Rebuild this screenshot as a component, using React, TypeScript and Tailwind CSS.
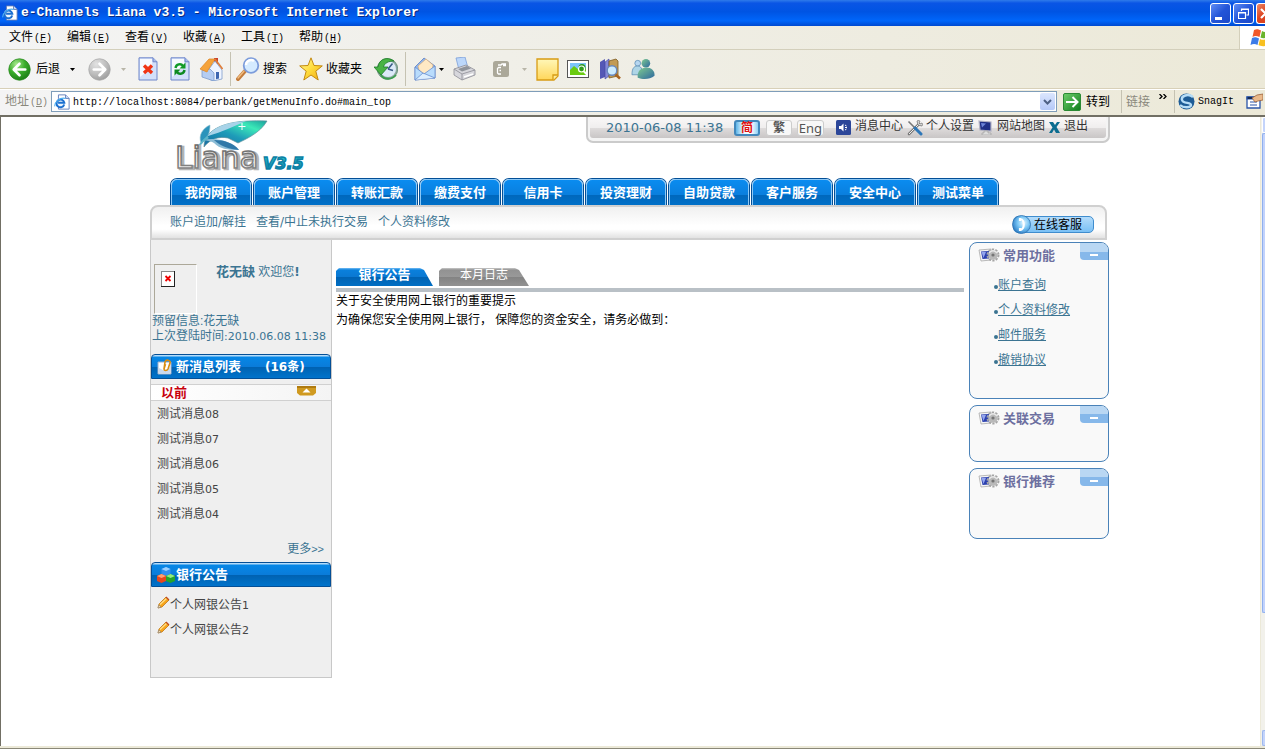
import React from "react";

const latin = "font-['DejaVu_Sans',sans-serif] text-[11px]";

function Key({ k }: { k: string }) {
  return (
    <span className="ml-px font-['Liberation_Mono',monospace] text-[10px]">
      (<span className="underline">{k}</span>)
    </span>
  );
}

function PageIcon({ size }: { size: number }) {
  return (
    <svg width={size} height={size} viewBox="0 0 18 18" className="shrink-0">
      <path d="M5 1h8l4 4v12H5z" fill="#fff" stroke="#5b79b8" />
      <path d="M13 1v4h4" fill="#cfdcf5" stroke="#5b79b8" />
      <circle cx="7" cy="10" r="5" fill="#e8f4ff" />
      <path d="M11.5 11.8A4.4 4.4 0 1 1 11.6 9.8H4.6" fill="none" stroke="#1b6fd0" strokeWidth="2.2" />
      <path d="M1 14C0 10 7 3 13 5" fill="none" stroke="#4fb0f0" strokeWidth="1.2" />
    </svg>
  );
}

function BackIcon() {
  return (
    <svg width="23" height="23" viewBox="0 0 24 24">
      <defs>
        <radialGradient id="bk" cx="35%" cy="25%" r="80%"><stop offset="0" stopColor="#a5e88c" /><stop offset=".5" stopColor="#3cae2c" /><stop offset="1" stopColor="#1c7d16" /></radialGradient>
      </defs>
      <circle cx="12" cy="12" r="11.2" fill="url(#bk)" stroke="#2a8a20" strokeWidth=".8" />
      <path d="M12 6l-6 6 6 6M6.5 12H18" fill="none" stroke="#fff" strokeWidth="2.8" strokeLinecap="round" strokeLinejoin="round" />
    </svg>
  );
}

function ForwardIcon() {
  return (
    <svg width="23" height="23" viewBox="0 0 24 24">
      <defs>
        <radialGradient id="fw" cx="35%" cy="25%" r="80%"><stop offset="0" stopColor="#e2e2e2" /><stop offset=".6" stopColor="#bcbcbc" /><stop offset="1" stopColor="#9c9c9c" /></radialGradient>
      </defs>
      <circle cx="12" cy="12" r="11.2" fill="url(#fw)" stroke="#aaa" strokeWidth=".8" />
      <path d="M12 6l6 6-6 6M17.5 12H6" fill="none" stroke="#fff" strokeWidth="2.8" strokeLinecap="round" strokeLinejoin="round" />
    </svg>
  );
}

function SheetShape() {
  return (
    <>
      <path d="M1 .8h14l4 4V23H1z" fill="#d3e0fa" stroke="#6f86c9" />
      <path d="M2 2h12v8L2 20z" fill="#fff" opacity=".8" />
      <path d="M15 .8v4h4" fill="#a9bdea" stroke="#6f86c9" />
    </>
  );
}

function StopIcon() {
  return (
    <svg width="20" height="24" viewBox="0 0 20 24">
      <SheetShape />
      <path d="M6 8.500l8 7.500M14 8.500l-8 7.500" stroke="#f03414" strokeWidth="3.400" />
    </svg>
  );
}

function RefreshIcon() {
  return (
    <svg width="20" height="24" viewBox="0 0 20 24">
      <SheetShape />
      <path d="M5.500 11C6 7 11 6 13 9" fill="none" stroke="#129a28" strokeWidth="2.400" />
      <path d="M15.500 5.500v6h-6z" fill="#129a28" />
      <path d="M14.500 13C14 17 9 18 7 15" fill="none" stroke="#0d8a20" strokeWidth="2.400" />
      <path d="M4.500 18.500v-6h6z" fill="#0d8a20" />
    </svg>
  );
}

function HomeIcon() {
  return (
    <svg width="24" height="24" viewBox="0 0 24 24">
      <path d="M15 1h4v6h-4z" fill="#c8402c" />
      <path d="M10 12l6-8 7 9v9l-9 2-4-2z" fill="#eef4ff" stroke="#7e9ccb" strokeWidth=".8" />
      <path d="M3 13l8-1 4 4v8L3 20z" fill="#b5cdf2" stroke="#7e9ccb" strokeWidth=".8" />
      <path d="M1 12L10 2h6l-7 11-1 2z" fill="#f5a33b" stroke="#e08a2c" strokeWidth=".8" />
      <path d="M16 2l7.500 10" stroke="#e07c38" strokeWidth="1.600" />
      <path d="M17 15h3v6.500l-3 .8z" fill="#3d66b0" />
    </svg>
  );
}

function SearchIcon() {
  return (
    <svg width="24" height="24" viewBox="0 0 24 24">
      <path d="M2 22l7-8" stroke="#c47b3a" strokeWidth="4" strokeLinecap="round" />
      <path d="M2 21l6-7" stroke="#f0bd80" strokeWidth="1.400" strokeLinecap="round" />
      <circle cx="15" cy="8.500" r="7.300" fill="#d5ebff" stroke="#7c9cdb" strokeWidth="1.800" />
      <path d="M10 8a5 5 0 0 1 8-4" fill="none" stroke="#fff" strokeWidth="2.500" />
    </svg>
  );
}

function StarIcon() {
  return (
    <svg width="24" height="24" viewBox="0 0 24 24">
      <defs><linearGradient id="st" x2="1" y2="1"><stop offset="0" stopColor="#fff8a0" /><stop offset=".5" stopColor="#ffdc3c" /><stop offset="1" stopColor="#f0a810" /></linearGradient></defs>
      <path d="M12 .8l3 7.700 8.300.4-6.500 5.300 2.400 8.800L12 18l-7.200 5 2.400-8.800L.7 8.900 9 8.500z" fill="url(#st)" stroke="#c38a10" />
    </svg>
  );
}

function HistoryIcon() {
  return (
    <svg width="24" height="24" viewBox="0 0 24 24">
      <circle cx="13.500" cy="12" r="10.300" fill="#8aa79c" stroke="#5f8a74" strokeWidth=".8" />
      <circle cx="14" cy="12" r="8" fill="#dceaf8" />
      <path d="M14 12l4.500-5.500M14 12l5 1.500" stroke="#3b5d86" strokeWidth="1.600" />
      <path d="M20 4C13-1 5 2 4 10H0l7 8 7-8h-4.500c1-4 5-6 10.500-6z" fill="#48b344" stroke="#1c7a28" strokeWidth=".8" />
      <path d="M7 18c3 5 11 5 15 0" fill="none" stroke="#3c9f50" strokeWidth="1.800" />
    </svg>
  );
}

function MailIcon() {
  return (
    <svg width="22" height="24" viewBox="0 0 22 24">
      <path d="M1 10L10 1l11 8v12L1 23z" fill="#8fb6ee" stroke="#6080c0" strokeWidth=".8" />
      <path d="M4 9l8-7 7 6-1 6-8 3-5-4z" fill="#ffe9c4" stroke="#d8a46a" strokeWidth=".6" />
      <path d="M1 10l9 7 11-8v12L1 23z" fill="#b9dcfc" stroke="#6a8fd0" strokeWidth=".8" />
      <path d="M1 23l8-7 12 5" fill="#fff" fillOpacity=".5" stroke="#6a8fd0" strokeWidth=".8" />
    </svg>
  );
}

function PrinterIcon() {
  return (
    <svg width="24" height="24" viewBox="0 0 24 24">
      <path d="M4 1l9-1 3 11-9 2z" fill="#bcd7fa" stroke="#7b9ed8" strokeWidth=".8" />
      <path d="M2 12l12-4 9 5v5l-13 5-8-5z" fill="#d7d7dc" stroke="#8d8d96" strokeWidth=".8" />
      <path d="M2 12l8 5 13-4M10 17v6" fill="none" stroke="#94949c" strokeWidth=".9" />
      <path d="M6 12l9-3 4 2.500-9 3z" fill="#8f939a" />
      <path d="M12 20l9-3" stroke="#fff" strokeWidth="1.500" />
    </svg>
  );
}

function EditIcon() {
  return (
    <svg width="18" height="18" viewBox="0 0 18 18">
      <rect x="1" y="1" width="16" height="16" rx="2.500" fill="#aba899" />
      <path d="M9 7.500H6.500L5.500 8.500V13l1 1H9M7.500 10.500H9M6 5H9l1-1h4M11 5.500h3" stroke="#fff" strokeWidth="1.300" fill="none" />
    </svg>
  );
}

function NoteIcon() {
  return (
    <svg width="23" height="23" viewBox="0 0 23 23">
      <defs><linearGradient id="nt" x2="0" y2="1"><stop offset="0" stopColor="#fff7b8" /><stop offset="1" stopColor="#ffd65a" /></linearGradient></defs>
      <path d="M1 1h21v17l-4 4H1z" fill="url(#nt)" stroke="#d79c14" strokeWidth="1.300" />
      <path d="M22 17h-5v5" fill="#ffeb9a" stroke="#d79c14" strokeWidth="1.300" />
    </svg>
  );
}

function PictureIcon() {
  return (
    <svg width="22" height="18" viewBox="0 0 22 18">
      <rect x=".5" y=".5" width="21" height="17" fill="#fff" stroke="#555" />
      <rect x="3" y="3" width="16" height="12" fill="#7cc4fa" />
      <path d="M3 10l4-4 5 4 3-5 4 4v6H3z" fill="#6acb10" />
      <circle cx="15" cy="7.500" r="3.500" fill="#2f9a1e" />
      <circle cx="14.500" cy="9" r="3" fill="none" stroke="#fff" strokeWidth="1.200" />
      <path d="M17 11.500l3 3" stroke="#fff" strokeWidth="2" />
    </svg>
  );
}

function BooksIcon() {
  return (
    <svg width="22" height="22" viewBox="0 0 22 22">
      <path d="M1 4l5-3v18l-5 2z" fill="#5457b5" /><path d="M6 4l4-3v17l-4 3z" fill="#8487d8" stroke="#40439a" strokeWidth=".6" />
      <path d="M10 3l7-2 2 2v15l-9 2z" fill="#c29a54" stroke="#7d5c22" strokeWidth=".8" />
      <circle cx="13" cy="12.500" r="4.800" fill="#ccebff" stroke="#6788bd" strokeWidth="1.400" />
      <path d="M16.500 16.500l4.500 4" stroke="#a76320" strokeWidth="2.600" />
    </svg>
  );
}

function PeopleIcon() {
  return (
    <svg width="24" height="22" viewBox="0 0 25 22">
      <defs><linearGradient id="pp" x2="1" y2="1"><stop offset="0" stopColor="#7ecb8f" /><stop offset="1" stopColor="#2d679f" /></linearGradient></defs>
      <circle cx="7" cy="5" r="3" fill="#b6d6f0" stroke="#5c8db5" strokeWidth=".8" />
      <path d="M1 17c0-8 3-9 6-9s5 2 5 9z" fill="#aed5e6" stroke="#5c8db5" strokeWidth=".8" />
      <circle cx="15.500" cy="5" r="4.500" fill="url(#pp)" />
      <path d="M7 20c-1-7 4-10.500 9-10.500S25 13 24.500 18c-5 4-12 4-17.500 2z" fill="url(#pp)" />
    </svg>
  );
}

function GoIcon() {
  return (
    <svg width="18" height="18" viewBox="0 0 18 18">
      <defs><linearGradient id="go" x2="1" y2="1"><stop offset="0" stopColor="#6fce6b" /><stop offset="1" stopColor="#0f7d1b" /></linearGradient></defs>
      <rect x=".5" y=".5" width="17" height="17" rx="1.500" fill="url(#go)" stroke="#2a8a33" />
      <path d="M3 9h11M9.500 4L14.500 9l-5 5" fill="none" stroke="#fff" strokeWidth="2" />
    </svg>
  );
}

function SnagItIcon() {
  return (
    <svg width="17" height="17" viewBox="0 0 17 17">
      <circle cx="8.500" cy="8.500" r="8" fill="#1d5c96" />
      <path d="M15 4C10 0 3 3 4 7s9 2 9 5-8 3-11 0" fill="none" stroke="#b6ddf7" strokeWidth="2.400" />
    </svg>
  );
}

function HandIcon() {
  return (
    <svg width="17" height="17" viewBox="0 0 17 17">
      <path d="M1 4h13v11H1z" fill="#fff" stroke="#2b55a8" strokeWidth="1.300" />
      <path d="M1 4h6v2H1zM4 9h7M4 12h7" stroke="#2b55a8" strokeWidth="1.200" />
      <path d="M6 5l5-3 6-1v6l-5 1-3 1z" fill="#eab98a" stroke="#99613a" strokeWidth=".8" />
    </svg>
  );
}

function Caret({ muted }: { muted?: boolean }) {
  return (
    <svg width="5" height="3" viewBox="0 0 5 3" className="shrink-0">
      <path d="M0 0h5L2.500 3z" fill={muted ? "#b8b5a8" : "#000"} />
    </svg>
  );
}

function Divider() {
  return <span className="w-px self-stretch bg-[#c5c2b2]" />;
}

function Logo() {
  return (
    <svg width="132" height="59" viewBox="0 0 132 59" aria-label="Liana V3.5">
      <defs>
        <linearGradient id="lf" x1="0" y1="1" x2="1" y2="0"><stop offset="0" stopColor="#1668a0" /><stop offset=".45" stopColor="#1e9bb8" /><stop offset=".75" stopColor="#3ce9b8" /><stop offset="1" stopColor="#1a9f9c" /></linearGradient>
        <linearGradient id="lg" x2="0" y2="1"><stop offset="0" stopColor="#666" /><stop offset="1" stopColor="#8a8a8a" /></linearGradient>
        <linearGradient id="lv" x2="0" y2="1"><stop offset="0" stopColor="#2fd0c8" /><stop offset="1" stopColor="#0b6ea4" /></linearGradient>
      </defs>
      <path d="M31 17C42 4 62 1 91 2 84 14 70 20 62 24L52 19c-9-2-18 1-24 9 0-4 1-8 3-11z" fill="url(#lf)" stroke="#5d8f9b" strokeWidth=".7" />
      <path d="M32 16C42 5 56 3 70 2 58 7 46 13 32 17z" fill="#a8d3e8" />
      <path d="M25 24c-3-8 2-15 9-18 0 8-2 13-9 18z" fill="#2b93bb" stroke="#8fc0d0" strokeWidth=".6" />
      <path d="M27 21c12-3 27 0 36 10-12 0-19-1-25-7-5-3-8-2-11-3z" fill="#8cbdd6" />
      <path d="M38 21c10 0 20 3 25 10-10-1-17-3-25-10z" fill="#2f78a8" />
      <path d="M31 17C25 22 21 27 19 33l3-1c2-6 6-10 11-13z" fill="#5bb4c8" />
      <path d="M66 4v7M62.500 7.500h7" stroke="#fff" strokeWidth="1" />
      <text x="1" y="50" fontFamily="DejaVu Sans" fontSize="31" fill="#aaa" stroke="#b4b4b4" strokeWidth="2.500">Liana</text>
      <text x="-1" y="49" fontFamily="DejaVu Sans" fontSize="31" fill="#f5f5f5" stroke="url(#lg)" strokeWidth="1.500">Liana</text>
      <text x="87" y="50" fontFamily="DejaVu Sans" fontWeight="bold" fontStyle="italic" fontSize="16" fill="url(#lv)" stroke="#0b7fa5" strokeWidth="1.400">V3.5</text>
    </svg>
  );
}

function SpeakerIcon() {
  return (
    <svg width="15" height="15" viewBox="0 0 15 15">
      <rect width="15" height="15" rx="1.500" fill="#2c4699" />
      <path d="M3 6h2l2.500-2.500v8L5 9H3z" fill="#fff" />
      <path d="M9 5l1.500 1M9 7.500h2M9 10l1.500-1" stroke="#fff" strokeWidth="1" />
    </svg>
  );
}

function ToolsIcon() {
  return (
    <svg width="16" height="16" viewBox="0 0 16 16">
      <path d="M2 14L12 4" stroke="#777" strokeWidth="2.600" strokeLinecap="round" />
      <path d="M2 14L11 5" stroke="#eee" strokeWidth="1" />
      <path d="M10 1l1 4 4 1c1-2 0-3 0-3l-2 1-1-1 1-2s-2-1-3 0z" fill="#ddd" stroke="#777" strokeWidth=".8" />
      <path d="M1.500 1.500L8 8" stroke="#777" strokeWidth="1.600" />
      <path d="M8 8l6 6" stroke="#2e77b8" strokeWidth="3" strokeLinecap="round" />
    </svg>
  );
}

function MonitorIcon() {
  return (
    <svg width="15" height="15" viewBox="0 0 15 15">
      <path d="M1 1l12 1v9L2 10z" fill="#1f2f86" stroke="#b4b4c4" strokeWidth="1.200" />
      <path d="M3 3l5 .5-4 4z" fill="#6d84d8" />
      <path d="M6 11h4v2h3v2H4v-2h2z" fill="#ddd" stroke="#999" strokeWidth=".6" />
    </svg>
  );
}

function ExitIcon() {
  return (
    <svg width="11" height="11" viewBox="0 0 11 11">
      <path d="M0 0h4l2 3 2-3h3L7.500 5l3.500 6H7L5 7.500 3 11H0l3.500-5.500z" fill="#0c6d90" />
    </svg>
  );
}

function PhoneIcon() {
  return (
    <svg width="19" height="19" viewBox="0 0 19 19" className="-my-px -ml-0.5 shrink-0">
      <defs><radialGradient id="ph" cx="60%" cy="40%" r="65%"><stop offset="0" stopColor="#e2f6ff" /><stop offset=".5" stopColor="#79c5f4" /><stop offset="1" stopColor="#2a7bc4" /></radialGradient></defs>
      <circle cx="9.500" cy="9.500" r="9" fill="url(#ph)" stroke="#2e72b0" strokeWidth=".8" />
      <path d="M8 4c5 0 5 11 0 11M8 3v3M8 13v3" stroke="#fff" strokeWidth="2.200" fill="none" />
    </svg>
  );
}

function ClipIcon() {
  return (
    <svg width="16" height="16" viewBox="0 0 16 16">
      <path d="M1 3h13v12H1z" fill="#fff" stroke="#9db0cc" />
      <path d="M2 9l6 3 5-4v6H2z" fill="#c9d9ee" />
      <path d="M7 10l1-7c1-3 6-2 5 1l-2 6c-1 2-4 2-4 0l1.500-5" fill="none" stroke="#d88c10" strokeWidth="1.600" />
    </svg>
  );
}

function CubesIcon() {
  return (
    <svg width="18" height="16" viewBox="0 0 18 16">
      <path d="M9 0l4.500 2v5L9 9 4.500 7V2z" fill="#2f8ff0" /><path d="M9 0l4.500 2L9 4 4.500 2z" fill="#9ad0ff" />
      <path d="M4.500 7L9 9v5l-4.500 2L0 14V9z" fill="#e8461c" /><path d="M4.500 7L9 9l-4.500 2L0 9z" fill="#ffa070" />
      <path d="M13.500 7L18 9v5l-4.500 2L9 14V9z" fill="#25a52c" /><path d="M13.500 7L18 9l-4.500 2L9 9z" fill="#90ec80" />
    </svg>
  );
}

function PencilIcon() {
  return (
    <svg width="13" height="13" viewBox="0 0 13 13">
      <path d="M1 12l1-4L9 1l3 3-7 7z" fill="#f7a51c" stroke="#b86c08" strokeWidth=".7" />
      <path d="M3 8.500L9.500 2.500" stroke="#ffe08a" strokeWidth="1.200" />
      <path d="M1 12l.8-3L4 11z" fill="#f8e2bd" stroke="#777" strokeWidth=".5" />
      <path d="M9 1l3 3" stroke="#c04a20" strokeWidth="1.300" />
    </svg>
  );
}

function GearIcon() {
  return (
    <svg width="22" height="15" viewBox="0 0 22 15">
      <path d="M1 2l12-1v11L3 13z" fill="#f4f4f4" stroke="#aaa" strokeWidth=".8" />
      <path d="M3 3.500l8-.5v7.500L4.500 11z" fill="#2a3fae" />
      <path d="M3.500 4L8 4l-2.500 6z" fill="#93a5ee" />
      <circle cx="15" cy="7" r="5.500" fill="none" stroke="#a5a5a5" strokeWidth="2" strokeDasharray="2.200 1.250" />
      <circle cx="15" cy="7" r="4.800" fill="#b9b9b9" />
      <path d="M11 5c2-3 6-3 8 0" fill="none" stroke="#e8e8e8" strokeWidth="1.500" />
      <circle cx="15" cy="7" r="1.600" fill="#757575" />
    </svg>
  );
}

const menus = [["文件", "F"], ["编辑", "E"], ["查看", "V"], ["收藏", "A"], ["工具", "T"], ["帮助", "H"]];
const tabs = ["我的网银", "账户管理", "转账汇款", "缴费支付", "信用卡", "投资理财", "自助贷款", "客户服务", "安全中心", "测试菜单"];
const messages = ["08", "07", "06", "05", "04"];

function BrowserChrome() {
  return (
    <header className="shrink-0 bg-[linear-gradient(90deg,#f4f4f4,#f0efe8_40%,#ece9d8)]">
      <div className="flex h-[26px] items-center overflow-hidden bg-[linear-gradient(#2f7bea,#0a55e5_12%,#0054e3_45%,#0066fa_80%,#0049d0)] pl-0.5">
        <PageIcon size={16} />
        <h1 className="ml-[3px] flex-1 whitespace-nowrap font-['Liberation_Mono',monospace] text-[13px] font-bold text-white [text-shadow:1px_1px_#0a2a80]">
          e-Channels Liana v3.5 - Microsoft Internet Explorer
        </h1>
        <div className="flex gap-0.5">
          <button aria-label="最小化" className="flex h-[21px] w-[21px] items-end rounded-[3px] border border-white bg-[linear-gradient(135deg,#5f8df5,#2355d8_50%,#1c49c8)] px-1 pb-[3px]">
            <span className="h-[3px] w-[7px] bg-white" />
          </button>
          <button aria-label="还原" className="flex h-[21px] w-[21px] items-center justify-center rounded-[3px] border border-white bg-[linear-gradient(135deg,#5f8df5,#2355d8_50%,#1c49c8)]">
            <svg width="11" height="11" viewBox="0 0 11 11"><path d="M3.500 3V1h7v6h-2M3.500 1.500h7M.5 4.500h7v6h-7zM.5 5h7" fill="none" stroke="#fff" strokeWidth="1.200" /></svg>
          </button>
          <button aria-label="关闭" className="h-[21px] w-[9px] overflow-hidden rounded-l-[3px] border border-r-0 border-white bg-[linear-gradient(135deg,#ee8a6a,#dc4420_60%)]">
            <svg width="14" height="19" viewBox="0 0 14 19"><path d="M4 5l9 9M13 5l-9 9" stroke="#fff" strokeWidth="2.200" /></svg>
          </button>
        </div>
      </div>

      <nav className="flex h-[24px] items-stretch border-b border-[#d3cfbb]">
        <div className="flex flex-1 items-center pl-[9px]">
          {menus.map(([t, k]) => (
            <button key={k} className="w-[58px] whitespace-nowrap text-left">{t}<Key k={k} /></button>
          ))}
        </div>
        <span className="flex w-[26px] items-center justify-end overflow-hidden border-l border-[#d3cfbb] bg-white">
          <svg width="15" height="18" viewBox="0 0 15 18">
            <path d="M4 1c3-1.500 5-.5 7 .5L9.500 8C7 7 5 6.500 2.500 8z" fill="#f0582a" />
            <path d="M12 2c1 .5 2 1 3 1v6c-2 .5-3 0-4.500-.5z" fill="#6ab42c" />
            <path d="M2 9c3-1.500 5-.5 7 .5L7.500 16c-2-1-4-1.500-7 0z" fill="#3c7ce8" />
            <path d="M10 10c2 1 3 1 5 .5V17c-3 .5-5-.2-6.500-1z" fill="#f8c020" />
          </svg>
        </span>
      </nav>

      <div className="flex h-[39px] items-center border-b border-[#d8d0b8] py-0.5 pl-2 whitespace-nowrap">
        <button className="flex items-center gap-[5px]"><BackIcon />后退</button>
        <span className="ml-[10px]"><Caret /></span>
        <button aria-label="前进" className="ml-[13px]"><ForwardIcon /></button>
        <span className="ml-[10px]"><Caret muted /></span>
        <button aria-label="停止" className="ml-3"><StopIcon /></button>
        <button aria-label="刷新" className="ml-3"><RefreshIcon /></button>
        <button aria-label="主页" className="ml-[9px]"><HomeIcon /></button>
        <span className="ml-[7px] flex self-stretch"><Divider /></span>
        <button className="ml-[5px] flex items-center gap-[3px]"><SearchIcon />搜索</button>
        <button className="ml-3 flex items-center gap-[3px]"><StarIcon />收藏夹</button>
        <button aria-label="历史" className="ml-3"><HistoryIcon /></button>
        <span className="ml-[7px] flex self-stretch"><Divider /></span>
        <button aria-label="邮件" className="ml-2 flex items-center gap-[3px]"><MailIcon /><Caret /></button>
        <button aria-label="打印" className="ml-2"><PrinterIcon /></button>
        <button aria-label="编辑" className="ml-4 flex items-center gap-3"><EditIcon /><Caret muted /></button>
        <button aria-label="便签" className="ml-[9px]"><NoteIcon /></button>
        <button aria-label="图片" className="ml-2"><PictureIcon /></button>
        <button aria-label="信息检索" className="ml-[10px]"><BooksIcon /></button>
        <button aria-label="联系人" className="ml-[10px]"><PeopleIcon /></button>
      </div>

      <form className="flex h-[28px] items-center border-b-2 border-[#716f64] border-t border-t-white pb-0.5 pl-[5px] whitespace-nowrap">
        <label htmlFor="url" className="w-[46px] text-[#8a887c]">地址<Key k="D" /></label>
        <div className="flex h-[21px] flex-1 items-center border border-[#7f9db9] bg-white pl-0.5">
          <PageIcon size={16} />
          <input id="url" readOnly value="http://localhost:8084/perbank/getMenuInfo.do#main_top" className="ml-[3px] w-full flex-1 pt-0.5 font-['Liberation_Mono',monospace] text-[10px] text-black outline-none" />
          <button type="button" aria-label="地址列表" className="mr-px flex h-[17px] w-[15px] items-center justify-center rounded-[2px] bg-[linear-gradient(#dbe6fe,#b5c9f8)]">
            <svg width="9" height="6" viewBox="0 0 9 6"><path d="M1 1l3.500 3.500L8 1" fill="none" stroke="#4d6185" strokeWidth="2" /></svg>
          </button>
        </div>
        <button type="button" className="ml-1.5 flex items-center gap-[5px]"><GoIcon />转到</button>
        <span className="ml-[11px] flex self-stretch"><Divider /></span>
        <span className="ml-1 text-[#8a887c]">链接</span>
        <span className="ml-[9px] w-[9px] self-start"><svg width="8" height="5" viewBox="0 0 8 5" className="mt-1"><path d="M.5 0L3 2.500.5 5M4.500 0L7 2.500 4.500 5" stroke="#000" strokeWidth="1.300" fill="none" /></svg></span>
        <span className="ml-1.5 flex self-stretch"><Divider /></span>
        <button type="button" className="ml-[3px] flex items-center gap-[3px] font-['Liberation_Mono',monospace] text-[10px]"><SnagItIcon />SnagIt</button>
        <span className="mr-[2px] ml-3"><HandIcon /></span>
      </form>
    </header>
  );
}

function UtilityBar() {
  return (
    <div className="flex h-[26px] w-[524px] rounded-b-[7px] border-2 border-t-0 border-[#cbcbcb] bg-[#f4f4f4] px-0.5 pb-[3px]">
      <div className="flex flex-1 items-center rounded-b-[3px] bg-[linear-gradient(#faf8f8,#f0eeee_50%,#dfdcdc_51%,#c9c6c6)] pl-4 whitespace-nowrap text-[#333]">
        <time className="w-[128px] font-['DejaVu_Sans',sans-serif] text-[13px] text-[#3b7492]">2010-06-08 11:38</time>
        <button className="flex h-[16px] w-[26px] items-center justify-center rounded-[3px] border-2 border-[#4288bc] bg-[linear-gradient(90deg,#5db5e8,#e6f6ff_30%,#fff_70%,#8ed0f4)] font-bold text-[#e01010]">简</button>
        <button className="ml-1.5 flex h-[16px] w-[26px] items-center justify-center rounded-[3px] border border-[#ccc] bg-[#f8f8f8] font-bold text-[#555]">繁</button>
        <button className="ml-[5px] flex h-[16px] w-[27px] items-center justify-center rounded-[3px] border border-[#ccc] bg-[#f8f8f8] font-['Noto_Sans',sans-serif] text-[13px] text-[#555]">Eng</button>
        <a href="#message" className="ml-3 flex items-center gap-1"><SpeakerIcon /><span className="-mt-1">消息中心</span></a>
        <a href="#settings" className="ml-1 flex items-center gap-[3px]"><ToolsIcon /><span className="-mt-1">个人设置</span></a>
        <a href="#sitemap" className="ml-1 flex items-center gap-1"><MonitorIcon /><span className="-mt-1">网站地图</span></a>
        <a href="#logout" className="ml-1 flex items-center gap-1"><ExitIcon /><span className="-mt-1">退出</span></a>
      </div>
    </div>
  );
}

function BarTitle({ icon, children }: { icon: React.ReactNode; children: React.ReactNode }) {
  return (
    <h2 className="flex h-[25px] items-center rounded-t-[4px] border border-[#044f96] bg-[linear-gradient(#b4dcfa_0,#b4dcfa_1px,#0687e6_2px,#0a7cda_50%,#0061b0_51%,#0073cb)] pl-[5px] text-[13px] font-bold whitespace-pre text-white">
      <span className="w-[19px]">{icon}</span>{children}
    </h2>
  );
}

function Sidebar() {
  return (
    <aside className="w-[182px] shrink-0 border border-t-0 border-[#c8c8c8] bg-[#efefef] pt-6 pb-[35px] text-[#3b7492]">
      <div className="flex pl-[3px]">
        <div role="img" aria-label="头像" className="h-[50px] w-[43px] border border-[#aca899] border-r-white border-b-white pt-1.5 pl-1.5">
          <svg width="14" height="16" viewBox="0 0 14 16"><path d="M0 0h14v16H0z" fill="#222" /><path d="M0 0h13v15H0z" fill="#888" /><path d="M1 1h12v14H1z" fill="#fff" /><path d="M4.500 5l5 5M9.500 5l-5 5" stroke="#e00" strokeWidth="1.800" /></svg>
        </div>
        <p className="ml-[19px] leading-4"><b className="text-[13px]">花无缺</b> 欢迎您<b className="font-['DejaVu_Sans',sans-serif]">!</b></p>
      </div>
      <p className="pl-px leading-[15px]">预留信息:花无缺</p>
      <p className="pl-px leading-[15px] whitespace-nowrap">上次登陆时间<span className={latin}>:2010.06.08 11:38</span></p>
      <div className="mt-[10px]"><BarTitle icon={<ClipIcon />}>新消息列表<span className="ml-6 font-['DejaVu_Sans','Noto_Sans_CJK_SC',sans-serif] text-[12px]">(16条)</span></BarTitle></div>
      <div className="mt-[5px] flex h-[17px] items-center justify-between border-y border-[#d0d0d0] bg-[linear-gradient(90deg,#fff,#f4f4f4)] pr-[15px] pl-[10px]">
        <h3 className="text-[13px] leading-[15px] font-bold text-[#c8000c]">以前</h3>
        <button aria-label="收起" className="self-start">
          <svg width="19" height="10" viewBox="0 0 19 10" className="mt-px"><path d="M0 0h19v7l-3 2.500H3L0 7z" fill="#d09a20" /><path d="M0 0h19v2H0z" fill="#b07b10" /><path d="M9.500 2.500l4 4h-8z" fill="#fff" /></svg>
        </button>
      </div>
      <ul className="text-[#444]">
        {messages.map((m) => (
          <li key={m} className="h-[25px] pl-1.5 leading-[27px]">测试消息<span className={latin}>{m}</span></li>
        ))}
      </ul>
      <div className="h-9 pt-2 pr-[7px] text-right leading-[30px]"><a href="#more">更多<span className="text-[11px]">&gt;&gt;</span></a></div>
      <BarTitle icon={<CubesIcon />}>银行公告</BarTitle>
      <ul className="mt-[5px] text-[#444]">
        {["1", "2"].map((n) => (
          <li key={n} className="flex h-[25px] pl-1.5 leading-[27px]"><span className="pt-1"><PencilIcon /></span><span>个人网银公告<span className={latin}>{n}</span></span></li>
        ))}
      </ul>
    </aside>
  );
}

function Panel({ title, size, children }: { title: string; size: string; children?: React.ReactNode }) {
  return (
    <section className={`rounded-[8px] border border-[#4a82b8] bg-[#f9f9f9] overflow-hidden ${size}`}>
      <header className="flex items-start">
        <span className="mt-[5px] ml-2"><GearIcon /></span>
        <h2 className="mt-[3px] ml-[3px] flex-1 text-[13px] leading-5 font-bold text-[#6d70a0]">{title}</h2>
        <button aria-label={`收起${title}`} className="flex h-[17px] w-7 items-center justify-center rounded-bl-[4px] bg-[linear-gradient(#b9d7f3_50%,#86b8ea_50%)] pt-1.5">
          <span className="h-0.5 w-2 bg-white" />
        </button>
      </header>
      {children}
    </section>
  );
}

export default function App() {
  return (
    <div className="flex h-screen flex-col overflow-hidden bg-[#ece9d8] font-['Liberation_Sans','Noto_Sans_CJK_SC',sans-serif] text-[12px] leading-4 text-black">
      <BrowserChrome />
      <div className="flex min-h-0 flex-1 border-l border-[#716f64]">
        <main className="min-w-0 flex-1 overflow-hidden bg-white pr-px">
          <div className="mx-auto w-[960px]">
            <div className="flex h-[61px] items-start justify-between pl-[26px]">
              <div className="pt-[2px]"><Logo /></div>
              <UtilityBar />
            </div>
            <nav className="flex gap-px pl-5">
              {tabs.map((t) => (
                <a key={t} href="#menu" className="flex h-[27px] w-[82px] rounded-t-[7px] border border-b-0 border-[#044f96] text-[13px] font-bold text-white">
                  <span className="flex flex-1 items-center justify-center rounded-t-[6px] border border-b-0 border-[#8cc8f6] bg-[linear-gradient(#0a8cf0,#0a7fde_58%,#0068bd_62%,#0070c8)]">{t}</span>
                </a>
              ))}
            </nav>
            <div className="mr-[3px] flex h-[35px] items-center justify-between rounded-t-[8px] border-2 border-[#d0d0d0] bg-[linear-gradient(#f0f0f0,#fff_60%,#fff_72%,#e2e2e2)] pr-[11px] pl-[18px] text-[#3b7492]">
              <div className="flex gap-[10px] pb-0.5 font-['DejaVu_Sans','Noto_Sans_CJK_SC',sans-serif]">
                <a href="#append">账户追加/解挂</a>
                <a href="#query">查看/中止未执行交易</a>
                <a href="#profile">个人资料修改</a>
              </div>
              <button className="mt-1 flex h-[17px] w-[81px] items-center gap-[3px] rounded-[5px] border border-[#3f8dce] bg-[linear-gradient(#b4dcfb,#79c0f5)] whitespace-nowrap text-black"><PhoneIcon />在线客服</button>
            </div>
            <div className="flex">
              <Sidebar />
              <article className="min-w-0 flex-1 pt-7 pr-[5px] pl-1 text-black">
                <div className="flex gap-1.5 text-white">
                  <button className="h-[18px] w-[97px] bg-[linear-gradient(#74bdf4_0,#0a80dc_2px,#0a78d2_50%,#0062b2_51%,#006fc4)] pb-1 font-bold text-[13px] leading-[14px] [clip-path:polygon(0_3px,3px_0,84px_0,88px_2px,97px_100%,0_100%)]">银行公告</button>
                  <button className="h-[18px] w-[90px] bg-[linear-gradient(#c8c8c8_0,#929292_2px,#999_50%,#838383_51%,#929292)] pb-1 leading-[14px] [clip-path:polygon(0_3px,3px_0,76px_0,80px_2px,90px_100%,0_100%)]">本月日志</button>
                </div>
                <div className="mt-0.5 h-1 bg-[#b9c0c6]" />
                <p className="leading-[18px]">关于安全使用网上银行的重要提示</p>
                <p className="leading-5">为确保您安全使用网上银行， 保障您的资金安全，请务必做到：</p>
              </article>
              <div className="mt-0.5 mr-px flex w-[140px] shrink-0 flex-col gap-1.5">
                <Panel title="常用功能" size="h-[157px]">
                  <ul className="mt-1.5 pl-6 text-[#3b7492]">
                    {["账户查询", "个人资料修改", "邮件服务", "撤销协议"].map((l) => (
                      <li key={l} className="flex h-[25px] items-center">
                        <span className="mt-1 h-1 w-1 rounded-full bg-[#3b7492]" /><a href="#link" className="underline">{l}</a>
                      </li>
                    ))}
                  </ul>
                </Panel>
                <Panel title="关联交易" size="h-[57px]" />
                <Panel title="银行推荐" size="h-[71px]" />
              </div>
            </div>
          </div>
        </main>
        <div aria-hidden="true" className="flex w-[5px] flex-col border-l border-[#ece9d8] bg-[#f2f1eb] pl-px">
          <span className="h-4 rounded-l-[2px] border border-r-0 border-white bg-[#c4d4fb]" />
          <span className="h-[480px] rounded-l-[2px] border border-r-0 border-[#8fb0ee] bg-[#c2d2fc]" />
          <span className="mt-auto h-4 rounded-l-[2px] border border-r-0 border-[#9db8ee] bg-[#c4d4fb]" />
        </div>
      </div>
      <div className="h-[3px] border-b border-[#8a8878] bg-[#ece9d8]" />
    </div>
  );
}
